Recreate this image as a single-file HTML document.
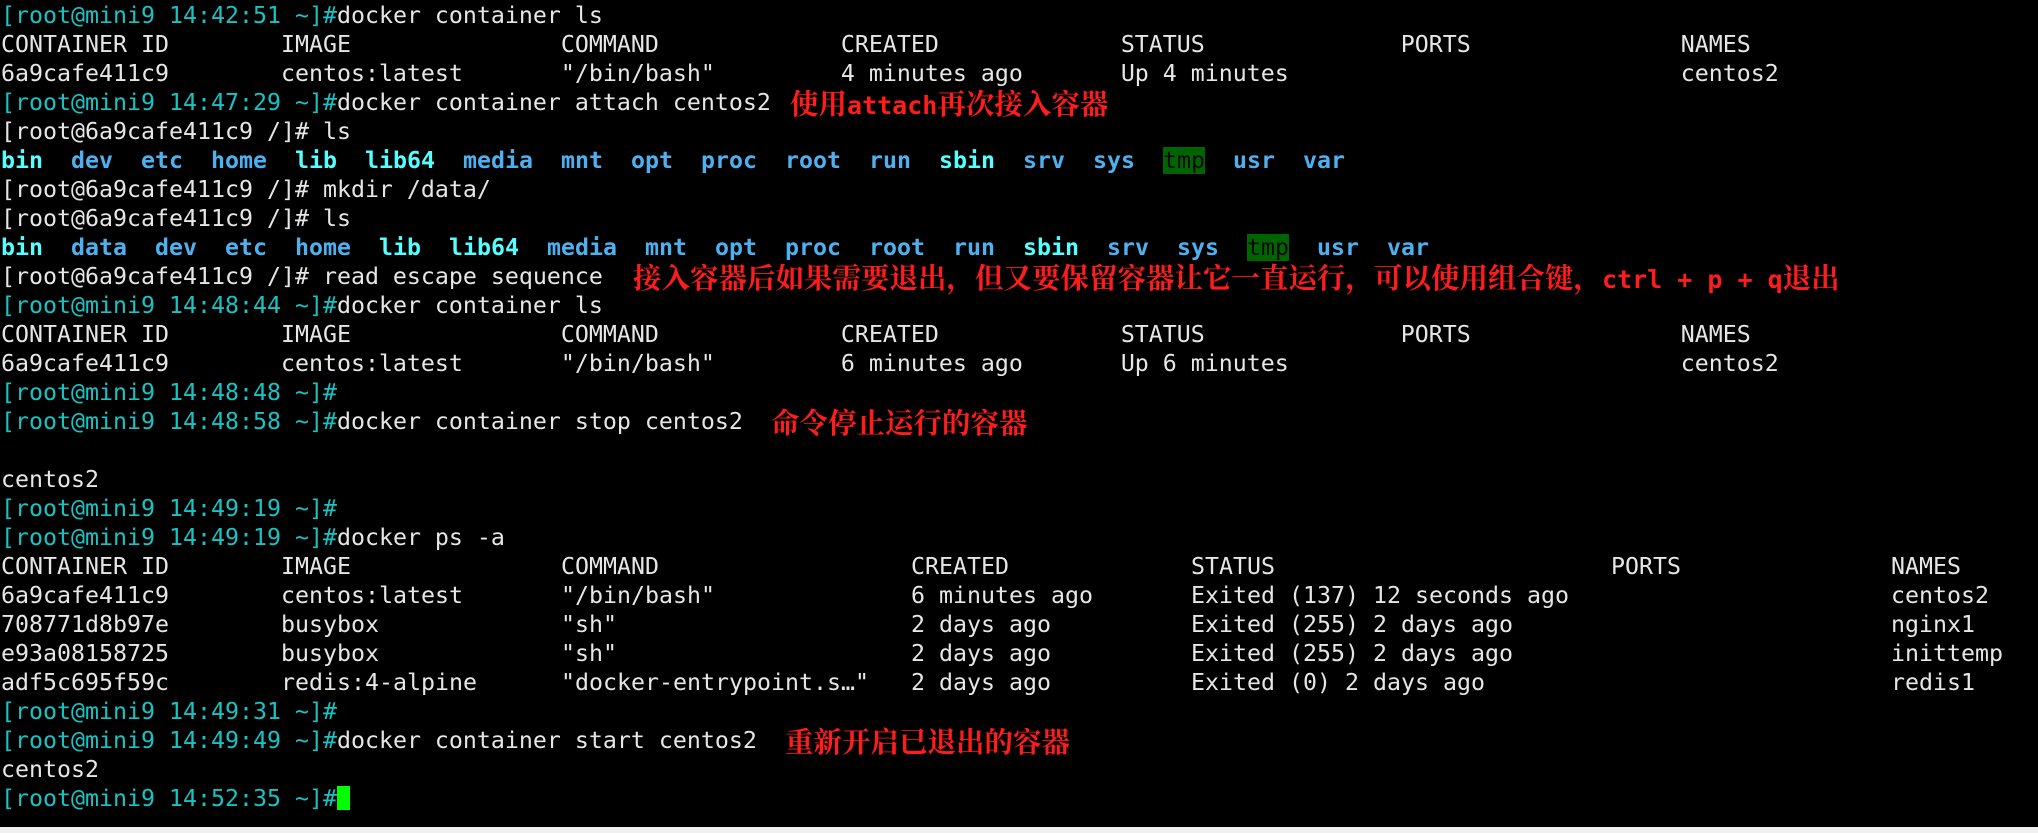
<!DOCTYPE html>
<html><head><meta charset="utf-8">
<style>
html,body{margin:0;padding:0;background:#000;width:2038px;height:833px;overflow:hidden;}
.t{position:absolute;left:1px;top:1px;}
.l{position:relative;height:29px;line-height:29px;white-space:pre;font-family:"DejaVu Sans Mono","Liberation Mono",monospace;font-size:23.25px;color:#e6e6e6;}
.p{color:#19c3c3;}
.b{color:#4fb0f0;font-weight:bold;}
.c{color:#55ffff;font-weight:bold;}
.g{background:#006400;color:#0a0a0a;}
.r{position:absolute;top:0;color:#ff1c1c;font-family:"Noto Serif CJK SC","WenQuanYi Zen Hei",serif;font-weight:bold;font-size:28.5px;line-height:29px;white-space:pre;}
.r b{font-family:"DejaVu Sans Mono",monospace;font-size:25px;}
.col{position:absolute;top:0;}
.cur{display:inline-block;width:13px;height:24px;background:#00ff00;vertical-align:-4px;}
.bar{position:absolute;left:0;top:827px;width:2038px;height:6px;background:#f0f0f0;}
</style></head><body>
<div class="t">
<div class="l"><span class="p">[root@mini9 14:42:51 ~]#</span>docker container ls</div>
<div class="l">CONTAINER ID        IMAGE               COMMAND             CREATED             STATUS              PORTS               NAMES</div>
<div class="l">6a9cafe411c9        centos:latest       "/bin/bash"         4 minutes ago       Up 4 minutes                            centos2</div>
<div class="l"><span class="p">[root@mini9 14:47:29 ~]#</span>docker container attach centos2<span class="r" style="left:789px">使用<b>attach</b>再次接入容器</span></div>
<div class="l">[root@6a9cafe411c9 /]# ls</div>
<div class="l"><span class="c">bin</span>  <span class="b">dev</span>  <span class="b">etc</span>  <span class="b">home</span>  <span class="c">lib</span>  <span class="c">lib64</span>  <span class="b">media</span>  <span class="b">mnt</span>  <span class="b">opt</span>  <span class="b">proc</span>  <span class="b">root</span>  <span class="b">run</span>  <span class="c">sbin</span>  <span class="b">srv</span>  <span class="b">sys</span>  <span class="g">tmp</span>  <span class="b">usr</span>  <span class="b">var</span></div>
<div class="l">[root@6a9cafe411c9 /]# mkdir /data/</div>
<div class="l">[root@6a9cafe411c9 /]# ls</div>
<div class="l"><span class="c">bin</span>  <span class="b">data</span>  <span class="b">dev</span>  <span class="b">etc</span>  <span class="b">home</span>  <span class="c">lib</span>  <span class="c">lib64</span>  <span class="b">media</span>  <span class="b">mnt</span>  <span class="b">opt</span>  <span class="b">proc</span>  <span class="b">root</span>  <span class="b">run</span>  <span class="c">sbin</span>  <span class="b">srv</span>  <span class="b">sys</span>  <span class="g">tmp</span>  <span class="b">usr</span>  <span class="b">var</span></div>
<div class="l">[root@6a9cafe411c9 /]# read escape sequence<span class="r" style="left:632px">接入容器后如果需要退出，但又要保留容器让它一直运行，可以使用组合键，<b>ctrl + p + q</b>退出</span></div>
<div class="l"><span class="p">[root@mini9 14:48:44 ~]#</span>docker container ls</div>
<div class="l">CONTAINER ID        IMAGE               COMMAND             CREATED             STATUS              PORTS               NAMES</div>
<div class="l">6a9cafe411c9        centos:latest       "/bin/bash"         6 minutes ago       Up 6 minutes                            centos2</div>
<div class="l"><span class="p">[root@mini9 14:48:48 ~]#</span></div>
<div class="l"><span class="p">[root@mini9 14:48:58 ~]#</span>docker container stop centos2<span class="r" style="left:770px">命令停止运行的容器</span></div>
<div class="l"> </div>
<div class="l">centos2</div>
<div class="l"><span class="p">[root@mini9 14:49:19 ~]#</span></div>
<div class="l"><span class="p">[root@mini9 14:49:19 ~]#</span>docker ps -a</div>
<div class="l"><span class="col" style="left:0">CONTAINER ID</span><span class="col" style="left:280px">IMAGE</span><span class="col" style="left:560px">COMMAND</span><span class="col" style="left:910px">CREATED</span><span class="col" style="left:1190px">STATUS</span><span class="col" style="left:1610px">PORTS</span><span class="col" style="left:1890px">NAMES</span></div>
<div class="l"><span class="col" style="left:0">6a9cafe411c9</span><span class="col" style="left:280px">centos:latest</span><span class="col" style="left:560px">"/bin/bash"</span><span class="col" style="left:910px">6 minutes ago</span><span class="col" style="left:1190px">Exited (137) 12 seconds ago</span><span class="col" style="left:1890px">centos2</span></div>
<div class="l"><span class="col" style="left:0">708771d8b97e</span><span class="col" style="left:280px">busybox</span><span class="col" style="left:560px">"sh"</span><span class="col" style="left:910px">2 days ago</span><span class="col" style="left:1190px">Exited (255) 2 days ago</span><span class="col" style="left:1890px">nginx1</span></div>
<div class="l"><span class="col" style="left:0">e93a08158725</span><span class="col" style="left:280px">busybox</span><span class="col" style="left:560px">"sh"</span><span class="col" style="left:910px">2 days ago</span><span class="col" style="left:1190px">Exited (255) 2 days ago</span><span class="col" style="left:1890px">inittemp</span></div>
<div class="l"><span class="col" style="left:0">adf5c695f59c</span><span class="col" style="left:280px">redis:4-alpine</span><span class="col" style="left:560px">"docker-entrypoint.s…"</span><span class="col" style="left:910px">2 days ago</span><span class="col" style="left:1190px">Exited (0) 2 days ago</span><span class="col" style="left:1890px">redis1</span></div>
<div class="l"><span class="p">[root@mini9 14:49:31 ~]#</span></div>
<div class="l"><span class="p">[root@mini9 14:49:49 ~]#</span>docker container start centos2<span class="r" style="left:784px">重新开启已退出的容器</span></div>
<div class="l">centos2</div>
<div class="l"><span class="p">[root@mini9 14:52:35 ~]#</span><span class="cur"></span></div>
</div>
<div class="bar"></div>
</body></html>
